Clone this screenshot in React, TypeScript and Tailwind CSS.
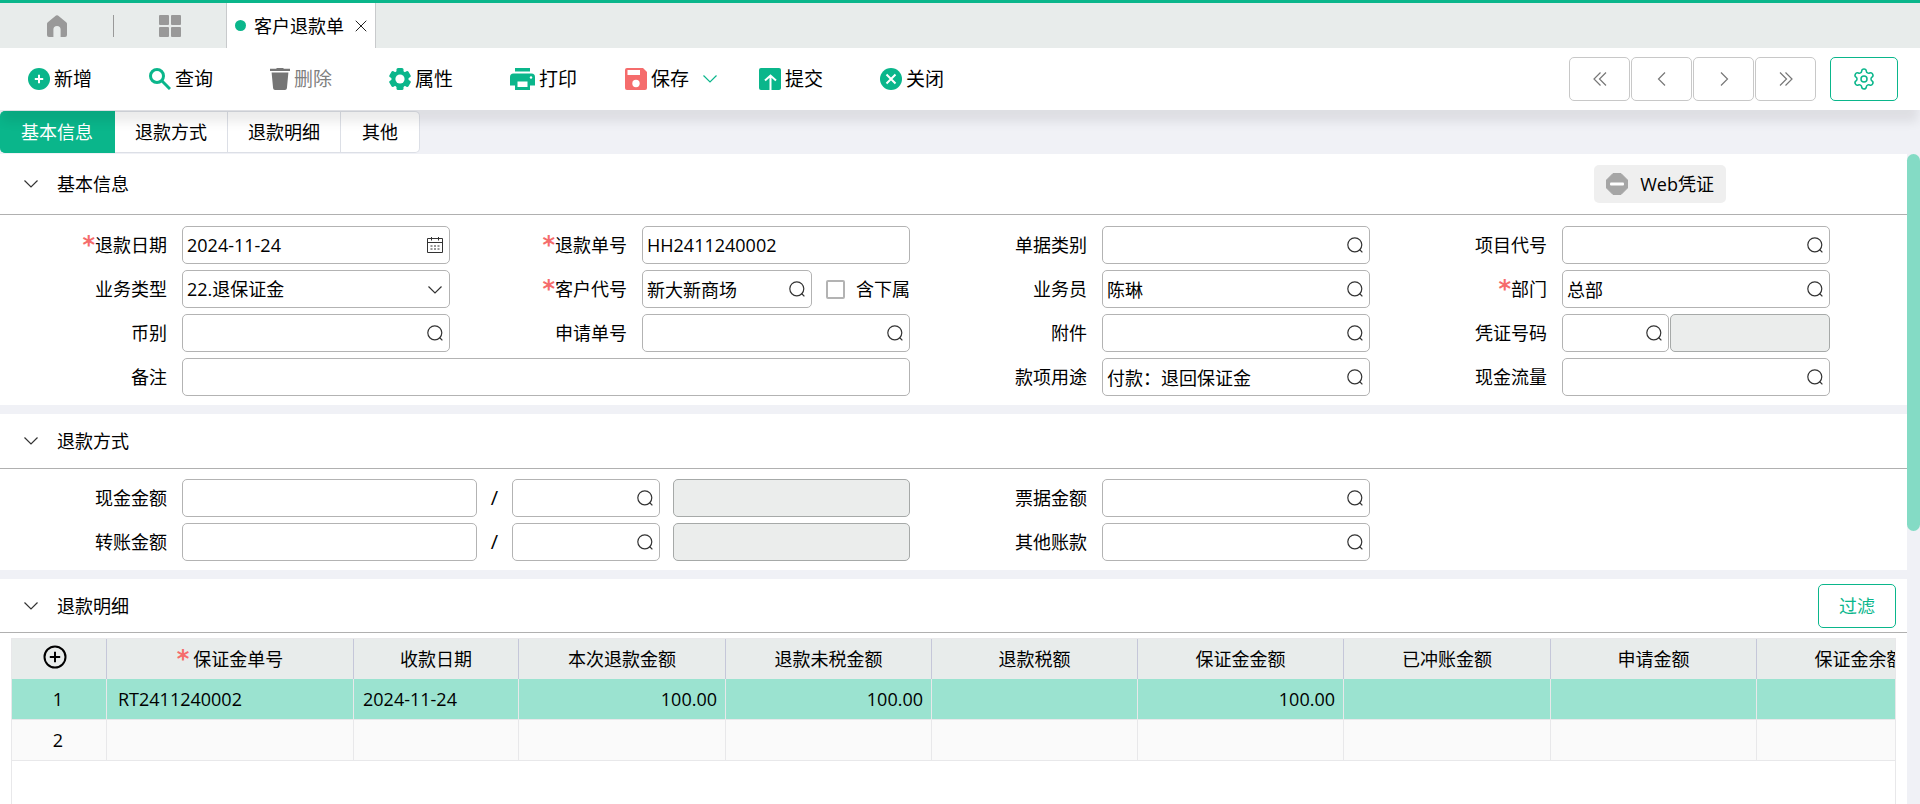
import React, { useState } from 'react';
import { Settings, X } from 'lucide-react';

const fontStack = "font-['Open_Sans','Noto_Sans_CJK_SC',sans-serif]";

/* ---------- icons ---------- */

const HomeIcon = () => (
  <svg width="22" height="22" viewBox="0 0 22 22" fill="#999">
    <path d="M10 .6a1.6 1.6 0 0 1 2 0l8.2 6.6c.5.4.8 1 .8 1.6V20a2 2 0 0 1-2 2h-4.4v-7.400a3.600 3.600 0 0 0-7.200 0V22H3a2 2 0 0 1-2-2V8.800c0-.6.3-1.200.8-1.600z" />
  </svg>
);

const GridIcon = () => (
  <svg width="24" height="22" viewBox="0 0 24 22" fill="#999">
    <rect x="1" y="0" width="10" height="10" rx="1" />
    <rect x="13" y="0" width="10" height="10" rx="1" />
    <rect x="1" y="12" width="10" height="10" rx="1" />
    <rect x="13" y="12" width="10" height="10" rx="1" />
  </svg>
);

const AddIcon = () => (
  <svg width="22" height="22" viewBox="0 0 22 22">
    <circle cx="11" cy="11" r="11" fill="#0ab68b" />
    <path d="M11 6.800v8.400M6.800 11h8.400" stroke="#fff" strokeWidth="2" />
  </svg>
);

const QueryIcon = () => (
  <svg width="22" height="22" viewBox="0 0 22 22" fill="none" stroke="#0ab68b" strokeWidth="3">
    <circle cx="8" cy="8" r="6.500" />
    <path d="M12.800 12.800l8.200 8.200" />
  </svg>
);

const TrashIcon = () => (
  <svg width="20" height="22" viewBox="0 0 20 22" fill="#757575">
    <path d="M0 .8h6L7 0h6l1 .8h6V3H0zM1.600 4.500h16.800l-1.500 15.800a2 2 0 0 1-2 1.700H5.100a2 2 0 0 1-2-1.700z" />
  </svg>
);

const GearIcon = () => (
  <svg width="22" height="22" viewBox="0 0 22 22" fill="#0ab68b">
    <circle cx="11" cy="11" r="8.600" />
    <rect x="7.500" y="0" width="7" height="22" rx="1.500" />
    <rect x="7.500" y="0" width="7" height="22" rx="1.500" transform="rotate(60 11 11)" />
    <rect x="7.500" y="0" width="7" height="22" rx="1.500" transform="rotate(120 11 11)" />
    <circle cx="11" cy="11" r="4.600" fill="#fff" />
  </svg>
);

const PrintIcon = () => (
  <svg width="25" height="22" viewBox="0 0 25 22">
    <path fill="#0ab68b" d="M5 0h15v3.400H5zM3.500 5.500h18A3.500 3.500 0 0 1 25 9v8.500h-5V22H5v-4.500H0V9a3.500 3.500 0 0 1 3.500-3.500z" />
    <rect x="7.500" y="13.500" width="10" height="5.500" fill="#fff" />
    <circle cx="21" cy="9.500" r="1.200" fill="#fff" />
  </svg>
);

const SaveIcon = () => (
  <svg width="22" height="22" viewBox="0 0 22 22">
    <path fill="#f56c6c" d="M2 0h16l4 4v16a2 2 0 0 1-2 2H2a2 2 0 0 1-2-2V2a2 2 0 0 1 2-2z" />
    <path fill="#fff" d="M2.500 2h12.500v5H2.500z" />
    <circle cx="11" cy="15.500" r="3.700" fill="#fff" />
  </svg>
);

const SubmitIcon = () => (
  <svg width="22" height="22" viewBox="0 0 22 22">
    <rect width="22" height="22" rx="2" fill="#0ab68b" />
    <path d="M11.500 22V8M6 12.500L11.500 7.500 17 12.500" fill="none" stroke="#fff" strokeWidth="2" />
  </svg>
);

const CloseIcon = () => (
  <svg width="22" height="22" viewBox="0 0 22 22">
    <circle cx="11" cy="11" r="11" fill="#0ab68b" />
    <path d="M6.500 6.500l9 9M15.500 6.500l-9 9" stroke="#fff" strokeWidth="2" />
  </svg>
);

const LookupIcon = () => (
  <svg width="16" height="16" viewBox="0 0 16 16" fill="none" stroke="#333" strokeWidth="1.200">
    <circle cx="7.800" cy="7.800" r="7" />
    <path d="M12.500 12.500l2.900 2.900" />
  </svg>
);

const CalendarIcon = () => (
  <svg width="16" height="16" viewBox="0 0 16 16" fill="none" stroke="#333" strokeWidth="1">
    <path d="M.5 1.500h15v14H.5zM.5 5.500h15M4.500 0v3.500M11.500 0v3.500" />
    <path d="M3.500 9h9M3.500 12h9" strokeDasharray="2 1.500" />
  </svg>
);

const ChevronIcon = ({ color = '#333', className = '' }: { color?: string; className?: string }) => (
  <svg width="14" height="8" viewBox="0 0 14 8" fill="none" stroke={color} strokeWidth="1.200" className={className}>
    <path d="M.5.5L7 7 13.500.5" />
  </svg>
);

const ArrowIcon = ({ d }: { d: string }) => (
  <svg width="14" height="14" viewBox="0 0 14 14" fill="none" stroke="#777" strokeWidth="1.200">
    <path d={d} />
  </svg>
);

const MinusIcon = () => (
  <svg width="22" height="22" viewBox="0 0 22 22">
    <path fill="#a6a6a6" d="M7 .5h8L21.500 7v8L15 21.500H7L.5 15V7z" stroke="#a6a6a6" strokeLinejoin="round" />
    <rect x="4" y="9.500" width="14" height="3" rx="1" fill="#fff" />
  </svg>
);

const PlusCircleIcon = () => (
  <svg width="24" height="24" viewBox="0 0 24 24" fill="none" stroke="#000" strokeWidth="2">
    <circle cx="12" cy="12" r="10.500" />
    <path d="M12 6.800v10.400M6.800 12h10.400" />
  </svg>
);

/* ---------- form pieces ---------- */

type FieldProps = {
  id: string;
  label: string;
  required?: boolean;
  first?: boolean;
  className?: string;
  children: React.ReactNode;
};

const Star = () => <span className="font-['DejaVu_Sans'] text-2xl font-bold leading-5 text-[#f56c6c]">*</span>;

function Field({ id, label, required, first, className = '', children }: FieldProps) {
  return (
    <div className={`flex items-center ${className}`}>
      <label
        htmlFor={id}
        className={`flex shrink-0 items-center justify-end pr-[15px] whitespace-nowrap ${first ? 'w-[182px]' : 'w-[192px]'}`}
      >
        {required && <Star />}
        {label}
      </label>
      <div className="flex min-w-0 flex-1 items-center">{children}</div>
    </div>
  );
}

type BoxProps = {
  id: string;
  value?: string;
  icon?: 'search' | 'calendar';
  disabled?: boolean;
  label?: string;
  className?: string;
};

function InputBox({ id, value = '', icon, disabled, label, className = 'flex-1' }: BoxProps) {
  const [text, setText] = useState(value);
  return (
    <div
      className={`flex h-[38px] min-w-0 items-center rounded-[5px] border pr-1.5 ${className} ${
        disabled ? 'border-[#a6a9a8] bg-[#ebedec]' : 'border-[#b3b3b3] bg-white'
      }`}
    >
      <input
        id={id}
        type="text"
        aria-label={label}
        value={text}
        disabled={disabled}
        onChange={(e) => setText(e.target.value)}
        className="h-full w-full min-w-0 bg-transparent pl-1 outline-none"
      />
      {icon && (
        <button type="button" aria-label={icon === 'search' ? '选择' : '日期'} className="shrink-0">
          {icon === 'search' ? <LookupIcon /> : <CalendarIcon />}
        </button>
      )}
    </div>
  );
}

const SectionHeader = ({ title, height, children }: { title: string; height: string; children?: React.ReactNode }) => (
  <div className={`flex items-center border-b border-[#b0b0b0] pl-6 ${height}`}>
    <button type="button" aria-label={title} className="mr-[19px]">
      <ChevronIcon />
    </button>
    <h2 className="flex-1">{title}</h2>
    {children}
  </div>
);

const formGrid = 'grid grid-cols-[450fr_460fr_460fr_460fr] gap-y-1.5 pr-[77px]';

/* ---------- data ---------- */

const tools = [
  { name: '新增', icon: AddIcon },
  { name: '查询', icon: QueryIcon },
  { name: '删除', icon: TrashIcon, disabled: true },
  { name: '属性', icon: GearIcon },
  { name: '打印', icon: PrintIcon },
];

const pagers = [
  { name: '首张', path: 'M7.500.5L1 7l6.500 6.500M13 .5L6.500 7l6.500 6.500' },
  { name: '上一张', path: 'M10 .5L3.500 7l6.500 6.500' },
  { name: '下一张', path: 'M4 .5L10.500 7 4 13.500' },
  { name: '末张', path: 'M1 .5L7.500 7 1 13.500M6.500.5L13 7l-6.500 6.500' },
];

const tabs = ['基本信息', '退款方式', '退款明细', '其他'];

const columns = [
  { name: '保证金单号', width: 247, required: true },
  { name: '收款日期', width: 165 },
  { name: '本次退款金额', width: 207 },
  { name: '退款未税金额', width: 206 },
  { name: '退款税额', width: 206 },
  { name: '保证金金额', width: 206 },
  { name: '已冲账金额', width: 207 },
  { name: '申请金额', width: 206 },
  { name: '保证金余额', width: 206 },
];

const rows = [
  ['RT2411240002', '2024-11-24', '100.00', '100.00', '', '100.00', '', '', ''],
  ['', '', '', '', '', '', '', '', ''],
];

const toolButton = 'flex items-center gap-1 whitespace-nowrap text-[19px]';

export default function App() {
  const [activeTab, setActiveTab] = useState('基本信息');
  const [bizType, setBizType] = useState('22');
  const [withSub, setWithSub] = useState(false);

  return (
    <div className={`flex h-screen flex-col overflow-hidden bg-[#f0f1f6] text-lg leading-6 text-black ${fontStack}`}>
      {/* Window tabs */}
      <div className="flex h-12 shrink-0 items-stretch border-t-[3px] border-[#0ab68b] bg-[#e8eceb]">
        <button type="button" aria-label="首页" className="flex w-[113px] items-center justify-center">
          <HomeIcon />
        </button>
        <span className="h-[22px] w-px self-center bg-[#999]" />
        <button type="button" aria-label="菜单" className="flex w-[112px] items-center justify-center">
          <GridIcon />
        </button>
        <div className="flex items-center border-x border-[#c8cacc] bg-white pl-2 pr-1">
          <span className="mr-2 size-[11px] rounded-full bg-[#0ab68b]" />
          <span>客户退款单</span>
          <button type="button" aria-label="关闭页签" className="ml-[7px]">
            <X size={20} strokeWidth={1.2} color="#222" />
          </button>
        </div>
      </div>

      {/* Toolbar */}
      <div className="relative z-10 flex h-[62px] shrink-0 items-center bg-white pl-7 pr-[22px] shadow-[0_14px_10px_-2px_rgba(0,0,0,0.08)]">
        <div className="flex items-center gap-[57px]">
          {tools.map(({ name, icon: Icon, disabled }) => (
            <button
              key={name}
              type="button"
              disabled={disabled}
              className={`${toolButton} ${disabled ? 'text-[#808080]' : ''}`}
            >
              <Icon />
              {name}
            </button>
          ))}
        </div>
        <button type="button" className={`${toolButton} ml-12`}>
          <SaveIcon />
          保存
        </button>
        <button type="button" aria-label="更多保存方式" className="ml-3.5 mr-[42px]">
          <ChevronIcon color="#0ab68b" />
        </button>
        <div className="flex items-center gap-[57px]">
          <button type="button" className={toolButton}>
            <SubmitIcon />
            提交
          </button>
          <button type="button" className={toolButton}>
            <CloseIcon />
            关闭
          </button>
        </div>
        <div className="ml-auto mr-3.5 flex gap-px">
          {pagers.map(({ name, path }) => (
            <button
              key={name}
              type="button"
              aria-label={name}
              className="flex h-11 w-[61px] items-center justify-center rounded-[5px] border border-[#c8c8c8]"
            >
              <ArrowIcon d={path} />
            </button>
          ))}
        </div>
        <button
          type="button"
          aria-label="设置"
          className="flex h-11 w-[68px] items-center justify-center rounded-[5px] border border-[#0ab68b] text-[#0ab68b]"
        >
          <Settings size={24} strokeWidth={1.5} />
        </button>
      </div>

      {/* Section tabs */}
      <div className="flex h-11 shrink-0 items-start pt-px">
        {tabs.map((tab) => (
          <button
            key={tab}
            type="button"
            onClick={() => setActiveTab(tab)}
            className={`h-[42px] border-y border-r first:rounded-l-[5px] last:rounded-r-[5px] last:px-[21px] ${
              activeTab === tab ? 'border-[#0ab68b] bg-[#0ab68b] px-[21px] text-white' : 'border-[#dcdfe6] bg-white px-5'
            }`}
          >
            {tab}
          </button>
        ))}
      </div>

      <div className="flex min-h-0 flex-1">
        <main className="flex min-w-0 flex-1 flex-col gap-[9px]">
          {/* 基本信息 */}
          <section className="shrink-0 bg-white pb-[9px]">
            <SectionHeader title="基本信息" height="h-[61px]">
              <button type="button" className="mr-[181px] flex h-[38px] items-center gap-3 rounded-[5px] bg-[#efefef] px-3">
                <MinusIcon />
                Web凭证
              </button>
            </SectionHeader>
            <div className={`${formGrid} pt-[11px]`}>
              <Field id="refundDate" label="退款日期" required first>
                <InputBox id="refundDate" value="2024-11-24" icon="calendar" />
              </Field>
              <Field id="refundNo" label="退款单号" required>
                <InputBox id="refundNo" value="HH2411240002" />
              </Field>
              <Field id="docType" label="单据类别">
                <InputBox id="docType" icon="search" />
              </Field>
              <Field id="project" label="项目代号">
                <InputBox id="project" icon="search" />
              </Field>

              <Field id="bizType" label="业务类型" first>
                <div className="relative flex-1">
                  <select
                    id="bizType"
                    value={bizType}
                    onChange={(e) => setBizType(e.target.value)}
                    className="h-[38px] w-full appearance-none rounded-[5px] border border-[#b3b3b3] bg-white pl-1"
                  >
                    <option value="22">22.退保证金</option>
                  </select>
                  <ChevronIcon className="pointer-events-none absolute right-2 top-4" />
                </div>
              </Field>
              <Field id="customer" label="客户代号" required>
                <InputBox id="customer" value="新大新商场" icon="search" />
                <label className="ml-3.5 flex shrink-0 items-center gap-[11px]">
                  <input
                    type="checkbox"
                    checked={withSub}
                    onChange={(e) => setWithSub(e.target.checked)}
                    className="size-[19px] appearance-none rounded-[2px] border-2 border-[#b3b3b3] bg-white checked:bg-[#0ab68b]"
                  />
                  含下属
                </label>
              </Field>
              <Field id="salesman" label="业务员">
                <InputBox id="salesman" value="陈琳" icon="search" />
              </Field>
              <Field id="dept" label="部门" required>
                <InputBox id="dept" value="总部" icon="search" />
              </Field>

              <Field id="currency" label="币别" first>
                <InputBox id="currency" icon="search" />
              </Field>
              <Field id="applyNo" label="申请单号">
                <InputBox id="applyNo" icon="search" />
              </Field>
              <Field id="attachment" label="附件">
                <InputBox id="attachment" icon="search" />
              </Field>
              <Field id="voucher" label="凭证号码">
                <InputBox id="voucher" icon="search" className="mr-px w-2/5" />
                <InputBox id="voucherName" label="凭证名称" disabled />
              </Field>

              <Field id="remark" label="备注" first className="col-span-2">
                <InputBox id="remark" />
              </Field>
              <Field id="purpose" label="款项用途">
                <InputBox id="purpose" value="付款：退回保证金" icon="search" />
              </Field>
              <Field id="cashFlow" label="现金流量">
                <InputBox id="cashFlow" icon="search" />
              </Field>
            </div>
          </section>

          {/* 退款方式 */}
          <section className="shrink-0 bg-white pb-[9px]">
            <SectionHeader title="退款方式" height="h-[55px]" />
            <div className={`${formGrid} pt-2.5`}>
              {[
                { id: 'cash', label: '现金金额', other: '票据金额' },
                { id: 'transfer', label: '转账金额', other: '其他账款' },
              ].map(({ id, label, other }) => (
                <React.Fragment key={id}>
                  <Field id={id} label={label} first className="col-span-2">
                    <InputBox id={id} className="flex-[287]" />
                    <span className="w-[35px] text-center text-xl">/</span>
                    <InputBox id={`${id}Account`} label={`${label}账户`} icon="search" className="flex-[140]" />
                    <InputBox id={`${id}AccountName`} label={`${label}账户名称`} disabled className="ml-[13px] flex-[229]" />
                  </Field>
                  <Field id={`${id}Other`} label={other}>
                    <InputBox id={`${id}Other`} icon="search" />
                  </Field>
                  <div />
                </React.Fragment>
              ))}
            </div>
          </section>

          {/* 退款明细 */}
          <section className="flex min-h-0 flex-1 flex-col bg-white">
            <SectionHeader title="退款明细" height="h-[54px]">
              <button type="button" className="mr-[11px] h-11 rounded-[5px] border border-[#0ab68b] px-5 text-[#0ab68b]">
                过滤
              </button>
            </SectionHeader>
            <div className="mx-[11px] mt-[5px] min-h-0 flex-1 overflow-hidden border border-b-0 border-[#e8e8ea]">
              <table className="w-[1951px] table-fixed border-separate border-spacing-0">
                <colgroup>
                  <col style={{ width: 95 }} />
                  {columns.map((col) => (
                    <col key={col.name} style={{ width: col.width }} />
                  ))}
                </colgroup>
                <thead>
                  <tr className="h-10 bg-[#e8eceb]">
                    <th className="border-r border-[#c5c7d9] p-0">
                      <button type="button" aria-label="新增行" className="flex w-full justify-center pb-1 pr-2">
                        <PlusCircleIcon />
                      </button>
                    </th>
                    {columns.map((col) => (
                      <th key={col.name} className="border-r border-[#c5c7d9] p-0 font-normal">
                        <span className="flex items-center justify-center gap-1">
                          {col.required && <Star />}
                          {col.name}
                        </span>
                      </th>
                    ))}
                  </tr>
                </thead>
                <tbody>
                  {rows.map((row, i) => (
                    <tr key={i} className={`h-[41px] ${i === 0 ? 'bg-[#9be3d0]' : 'bg-[#fafafa]'}`}>
                      <td className="border-b border-r border-[#e8e8ea] p-0 pr-0.5 text-center">{i + 1}</td>
                      {row.map((cell, j) => (
                        <td
                          key={j}
                          className={`border-b border-r border-[#e8e8ea] py-0 ${
                            j === 0 ? 'px-[11px]' : j === 1 ? 'px-[9px]' : 'px-2 text-right'
                          }`}
                        >
                          {cell}
                        </td>
                      ))}
                    </tr>
                  ))}
                </tbody>
              </table>
            </div>
          </section>
        </main>

        {/* Page scroll bar */}
        <div className="w-[13px] shrink-0">
          <div className="h-[58%] rounded-full bg-[#84dbc5]" />
        </div>
      </div>
    </div>
  );
}
